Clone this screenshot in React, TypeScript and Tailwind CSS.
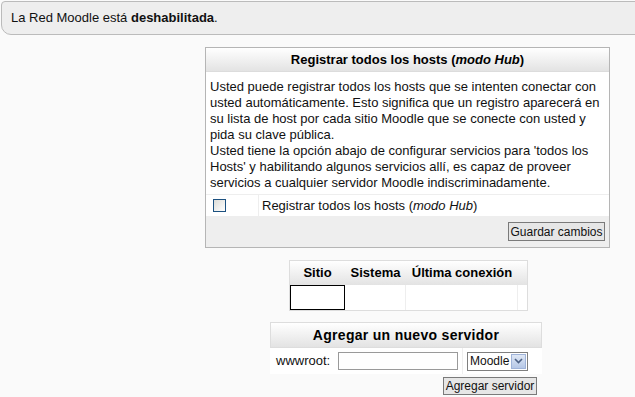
const font = { fontFamily: '"Liberation Sans", Arial, sans-serif' };

function HeaderCell({ children, className = '' }: { children: React.ReactNode; className?: string }) {
  return (
    <div className={`flex items-center justify-center bg-gradient-to-b from-white to-[#e3e3e3] font-bold text-[13px] text-black ${className}`}>
      {children}
    </div>
  );
}

export default function App() {
  return (
    <div className="min-h-[397px] overflow-hidden bg-[#fafafa] text-[13px] text-[#111]" style={font}>
      {/* notice */}
      <div className="mt-px ml-px -mr-4 h-[34px] flex items-center pl-[9px] bg-[#eeeeee] border border-[#bbbbbb] rounded-tl-[4px] rounded-bl-[10px]">
        <span>
          La Red Moodle está <b>deshabilitada</b>.
        </span>
      </div>

      {/* register all hosts */}
      <div className="mt-[12px] ml-[205px] w-[405px] border border-[#b5b5b5] bg-white">
        <HeaderCell className="h-[24px] border-b border-[#dcdcdc]">
          <span>
            Registrar todos los hosts (<i>modo Hub</i>)
          </span>
        </HeaderCell>
        <div className="px-[4px] pt-[7px] pb-[3px] leading-[16px] border-b border-[#eeeeee]">
          Usted puede registrar todos los hosts que se intenten conectar con usted automáticamente. Esto significa que un registro aparecerá en su lista de host por cada sitio Moodle que se conecte con usted y pida su clave pública.
          <br />
          Usted tiene la opción abajo de configurar servicios para 'todos los Hosts' y habilitando algunos servicios allí, es capaz de proveer servicios a cualquier servidor Moodle indiscriminadamente.
        </div>
        <div className="flex h-[21px]">
          <div className="w-[53px] flex items-center pl-[7px] border-r border-[#eeeeee]">
            <span className="w-[13px] h-[13px] border border-[#1c5180] bg-gradient-to-br from-[#dcdcd7] to-white" />
          </div>
          <div className="flex items-center pl-[3px]">
            <span>
              Registrar todos los hosts (<i>modo Hub</i>)
            </span>
          </div>
        </div>
        <div className="h-[31px] bg-[#eeeeee] flex items-center justify-end pr-[4px]">
          <button className="h-[19px] w-[97px] px-0 whitespace-nowrap border border-[#7a7a7a] bg-[#e6e6e6] text-[12px] leading-none" style={font}>
            Guardar cambios
          </button>
        </div>
      </div>

      {/* hosts table */}
      <div className="mt-[12px] ml-[289px] w-[239px] border border-[#dddddd] bg-white">
        <div className="flex h-[24px] bg-gradient-to-b from-white to-[#e3e3e3] font-bold text-black">
          <div className="w-[55px] flex items-center justify-center">Sitio</div>
          <div className="w-[61px] flex items-center justify-center">Sistema</div>
          <div className="w-[112px] flex items-center justify-center">Última conexión</div>
          <div className="flex-1" />
        </div>
        <div className="flex h-[25px]">
          <div className="w-[55px] border border-black" />
          <div className="w-[61px] border-r border-[#eeeeee]" />
          <div className="w-[112px] border-r border-[#eeeeee]" />
          <div className="flex-1" />
        </div>
      </div>

      {/* add new server */}
      <div className="mt-[11px] ml-[270px] w-[272px]">
        <HeaderCell className="h-[26px] border border-[#dddddd] text-[14px] tracking-[0.3px]">
          Agregar un nuevo servidor
        </HeaderCell>
        <div className="flex h-[26px] bg-white items-center">
          <div className="flex items-center w-[193px] pl-[6px] h-full border-r border-[#eeeeee]">
            <span className="w-[62px]">wwwroot:</span>
            <span className="w-[120px] h-[18px] border border-[#9a9a9a] bg-white" />
          </div>
          <div className="pl-[4px] flex items-center">
            <div className="flex items-center h-[19px] w-[61px] border border-[#7f7f7f] bg-white">
              <span className="pl-[2px] flex-1 text-[12px] whitespace-nowrap">Moodle</span>
              <span className="shrink-0 w-[15px] h-[15px] mr-px bg-gradient-to-b from-[#dfe7f5] to-[#b5c7e6] border border-[#9fb3d9] flex items-center justify-center">
                <svg width="9" height="6" viewBox="0 0 9 6">
                  <path d="M1 1 L4.5 4.5 L8 1" fill="none" stroke="#4d6185" strokeWidth="1.6" />
                </svg>
              </span>
            </div>
          </div>
        </div>
        <div className="flex justify-end pr-[5px] pt-[3px]">
          <button className="h-[18px] w-[94px] px-0 whitespace-nowrap border border-[#7a7a7a] bg-[#e6e6e6] text-[12px] leading-none" style={font}>
            Agregar servidor
          </button>
        </div>
      </div>
    </div>
  );
}
